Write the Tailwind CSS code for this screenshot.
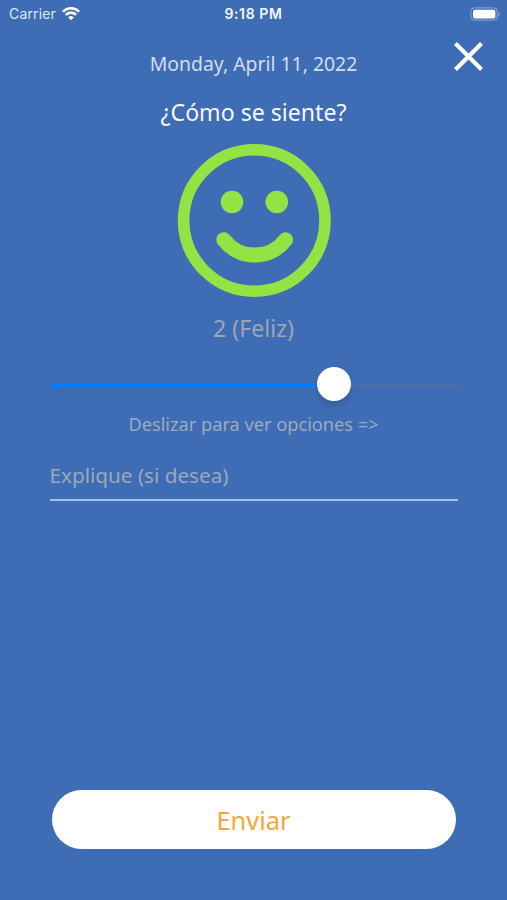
<!DOCTYPE html>
<html lang="es">
<head>
<meta charset="utf-8">
<title>¿Cómo se siente?</title>
<script src="https://cdn.jsdelivr.net/npm/@tailwindcss/browser@4"></script>
</head>
<body class="bg-[#3f6db5]">
<div class="flex h-[900px] w-[507px] flex-col overflow-hidden bg-[#3f6db5] font-['Noto_Sans',sans-serif]">
  <header class="grid h-[27px] shrink-0 grid-cols-3 items-center pl-[9px] pr-[6px] font-['Inter',sans-serif] text-[#f0f6ff]">
    <div class="flex items-center gap-[6px]">
      <span class="text-[14px] leading-none tracking-[0.15px] text-[#dde9fa]">Carrier</span>
      <svg class="h-[14px] w-[18px]" viewBox="0 0 18 14" fill="none" stroke="#fff" stroke-width="2.6">
        <path d="M.9 4.6a11.4 11.4 0 0 1 16.2 0M3.8 7.8a7.3 7.3 0 0 1 10.4 0"/>
        <path d="M9 13.2 6.2 10.4a4 4 0 0 1 5.6 0z" fill="#fff" stroke="none"/>
      </svg>
    </div>
    <span class="-ml-[3px] whitespace-nowrap pt-[1px] text-center text-[14px] font-semibold leading-none tracking-[0.6px]">9:18 PM</span>
    <svg class="h-[14px] w-[31px] justify-self-end" viewBox="0 0 31 14">
      <rect x=".9" y=".9" width="26.4" height="12.2" rx="3.6" fill="none" stroke="#fff" stroke-opacity=".4"/>
      <rect x="3" y="2.7" width="22.4" height="8.8" rx="2" fill="#fff"/>
      <path d="M28.6 4.8q2 2.2 0 4.4z" fill="#fff" fill-opacity=".45"/>
    </svg>
  </header>
  <div class="grid h-[58px] shrink-0 grid-cols-[1fr_auto_1fr] items-start pr-[24px]">
    <span></span>
    <p class="ml-[24px] mt-[23px] whitespace-nowrap text-[19.4px] leading-[28px] text-[#d3dcec]">Monday, April 11, 2022</p>
    <button class="mt-[15px] justify-self-end" aria-label="Cerrar">
      <svg class="size-[29px]" viewBox="0 0 29 29" stroke="#fff" stroke-width="4.2"><path d="M1.5 1.5 27.5 27.5M27.5 1.5 1.5 27.5"/></svg>
    </button>
  </div>
  <main class="flex grow flex-col items-center">
    <h1 class="mt-[10px] text-[23.1px] leading-[34px] text-[#f3f8ff]">¿Cómo se siente?</h1>
    <svg class="mt-[15px] h-[153px] w-[154px] shrink-0" viewBox="0 0 154 153" fill="none" stroke="#92e343">
      <circle cx="77.3" cy="76.5" r="70.7" stroke-width="11.6"/>
      <g fill="#92e343" stroke="none"><circle cx="55" cy="58" r="11.3"/><circle cx="99.8" cy="58" r="11.3"/></g>
      <path d="M46.8 95.7A38.7 38.7 0 0 0 108.6 95.7" stroke-width="15" stroke-linecap="round"/>
    </svg>
    <p class="mt-[14px] text-[23.1px] leading-[34px] text-[#9ba5b4]">2 (Feliz)</p>
    <div class="ml-[5px] mt-[21px] flex h-[36px] w-[410px] items-center">
      <div class="mt-[3px] h-[5px] w-[269px] bg-[#067cff]"></div>
      <div class="-ml-[3px] mb-[1px] size-[34px] shrink-0 rounded-full bg-white shadow-[0_4px_9px_rgba(0,0,0,0.16)]"></div>
      <div class="mt-[3px] h-[3px] grow bg-[#4a6dac]"></div>
    </div>
    <p class="mt-[9px] text-[18.2px] leading-[26px] text-[#9eaabd]">Deslizar para ver opciones =&gt;</p>
    <div class="mt-[23px] h-[41px] w-[408px] border-b-2 border-[#a4c3e6] text-[20.7px] leading-[30px] text-[#9ba8b9]">Explique (si desea)</div>
    <button class="mb-[51px] mt-auto h-[59px] w-[404px] rounded-full bg-white pt-[1px] text-[25.4px] text-[#f3a63b]">Enviar</button>
  </main>
</div>
</body>
</html>
